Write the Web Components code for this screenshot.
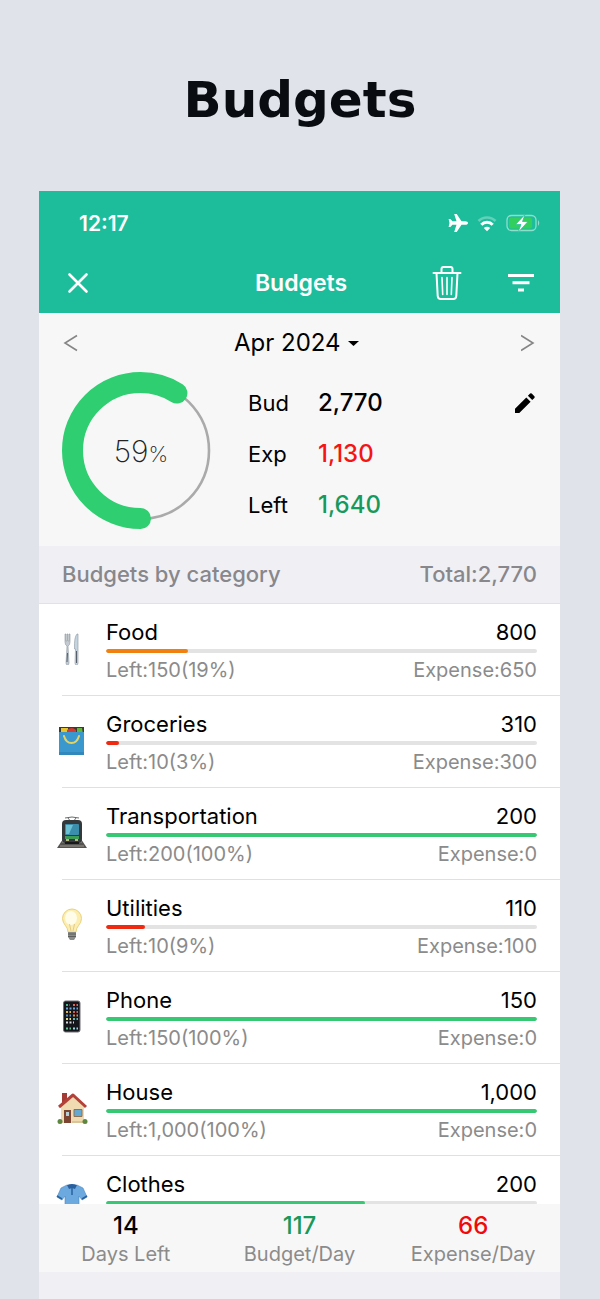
<!DOCTYPE html>
<html lang="en">
<head>
<meta charset="utf-8">
<meta name="viewport" content="width=device-width, initial-scale=1">
<title>Budgets</title>
<style>
    body {
        margin: 0;
        background: #e0e4ea;
        color: #000;
        font-family: Inter, "Liberation Sans", sans-serif;
        font-size: 22px;
    }
</style>
</head>
<body>
<budget-page></budget-page>

<script>
// Small colour pictures, one per category
const categoryIcons = {
    food: `
        <g stroke="#8f98a3" stroke-width=".6">
            <path fill="#c3cad2" d="M10 3v8q0 3 2 4l-1 17q0 2 1.500 2t1.500-2l-1-17q2-1 2-4V3h-1v7h-1V3h-1v7h-1V3z"/>
            <path fill="#c3d3df" d="M22 3q-3 3-2.500 15h1l-.5 14q0 2 1.500 2t1.500-2V3z"/>
        </g>
        <path d="M12.500 22l-.5 9M21.500 20v12" stroke="#56606c" stroke-width="1"/>`,
    groceries: `
        <path fill="#3f3b2c" d="M4 4h25v7H4z"/>
        <path fill="#e8c32c" d="M6 5h7v6H6z"/>
        <path fill="#d9382e" d="M12 7q5-4 9 0v4h-9z"/>
        <path fill="#61b83b" d="M22 5h5l1 6h-6z"/>
        <path fill="#3b98cf" d="M4 9h25v23H4z"/>
        <path fill="#3188bd" d="M4 29h25v3H4z"/>
        <path fill="none" stroke="#e5d360" stroke-width="2" stroke-linecap="round" d="M9 13q2 7 7.500 7t7.500-7"/>`,
    transportation: `
        <path fill="#565451" d="M8 24h18l6 9H2z"/>
        <path stroke="#99938c" stroke-width="1" d="M7 27h20M5 31h24"/>
        <path fill="none" stroke="#6a6c6c" stroke-width="1" d="M10 3q7-2 14 0M13 3l3 4M21 3l-3 4"/>
        <rect fill="#34393b" x="7" y="5" width="20" height="23" rx="4"/>
        <rect fill="#3c8fac" x="10" y="9" width="14" height="11" rx="1"/>
        <path fill="#6cc2d4" d="M11 10h7l-4 9h-3z"/>
        <path fill="#3e9b54" d="M10 21h14v3H10z"/>
        <path stroke="#e8e09a" stroke-width="1.500" d="M11 25h3M20 25h3"/>
        <path stroke="#17191a" stroke-width="2" d="M10 28h14"/>`,
    utilities: `
        <path fill="#fbeeb0" stroke="#ead27d" d="M17 2a9.500 9.500 0 0 0-9.500 9.500c0 6 5.500 7.500 5.500 13.500h8c0-6 5.500-7.500 5.500-13.500A9.500 9.500 0 0 0 17 2z"/>
        <ellipse fill="#fffce9" cx="16" cy="11" rx="6" ry="7"/>
        <path fill="none" stroke="#dcc27a" stroke-width=".8" d="M14.500 17l1.500 7M19.500 17l-1.500 7"/>
        <path fill="#8b8d8a" d="M13 25h8v5l-2 3h-4l-2-3z"/>
        <path stroke="#5d5f5d" d="M13 27h8M13 29.500h8"/>`,
    phone: `
        <rect fill="#15161c" stroke="#6e6f78" x="8.500" y="2" width="16.500" height="31" rx="2"/>
        <g fill="none" stroke-width="2" stroke-dasharray="2 1.500">
            <path stroke="#47b889" d="M11 6h4"/><path stroke="#dd6659" d="M18 6h5"/>
            <path stroke="#6ba6df" d="M11 9.500h12"/>
            <path stroke="#e3b34a" d="M11 13h5"/><path stroke="#ce5f58" d="M18 13h5"/>
            <path stroke="#5792d5" d="M11 16.500h5"/><path stroke="#e58747" d="M18 16.500h5"/>
            <path stroke="#e4dc7a" d="M11 20h5"/><path stroke="#57b9bb" d="M18 20h5"/>
            <path stroke="#d7d9de" d="M11 23.500h8"/>
            <path stroke="#60c98f" d="M11 29.500h5"/><path stroke="#9ad6e3" d="M18 29.500h5"/>
        </g>`,
    house: `
        <path fill="#a33c36" d="M7 2h5v10H7z"/>
        <path fill="#f0dab1" d="M6 16L18 5l11 11v16H6z"/>
        <path fill="none" stroke="#b34039" stroke-width="3" stroke-linejoin="round" d="M4 16L18 4l13 12"/>
        <path fill="#7c4532" d="M9 19h7v13H9z"/>
        <path fill="#b7cfd6" d="M11 21h3v4h-3z"/>
        <path fill="#65a8d1" stroke="#8e7152" d="M19 18.500h8v7h-8z"/>
        <path stroke="#d4bc91" stroke-width="1.500" d="M17 31h12"/>
        <circle fill="#5d8740" cx="5" cy="30.500" r="2.500"/>
        <circle fill="#5d8740" cx="30" cy="30.500" r="2.500"/>`,
    clothes: `
        <path fill="#6ca9df" stroke="#4b86c1" stroke-width=".6" d="M12 2q5 4 10 0l6 3 4 9-5 3-3-4v19H10V13l-3 4-5-3 4-9z"/>
        <path fill="#285f9e" d="M12 2q5-2 10 0l-2 4-3-1-3 1z"/>
        <path fill="none" stroke="#28639f" stroke-width="1.500" d="M2 13l5 3M32 13l-5 3M17 5v7"/>`
};

// Page: store heading on top, app window under it
class BudgetPage extends HTMLElement {
    constructor() {
        super();
        this.attachShadow({ mode: 'open' });
        this.shadowRoot.innerHTML = `
            <style>
                :host {
                    display: flex;
                    flex-direction: column;
                    height: 100vh;
                }

                h1 {
                    margin: 0;
                    padding: 70px 16px 61px;
                    text-align: center;
                    font: bold 50px/60px "DejaVu Sans", sans-serif;
                    color: #090d12;
                }

                main {
                    flex: 1;
                    min-height: 0;
                    display: flex;
                    flex-direction: column;
                    margin: 0 40px 0 39px;
                    background: #f0f0f4;
                }

                .heading {
                    display: flex;
                    justify-content: space-between;
                    padding: 14px 23px;
                    border-bottom: 1px solid #e2e2e6;
                    font-size: 22px;
                    line-height: 29px;
                    font-weight: 450;
                    color: #87878c;
                }

                h2 {
                    margin: 0;
                    font: inherit;
                }

                .list {
                    flex: 1;
                    min-height: 0;
                    overflow-y: auto;
                    scrollbar-width: none;
                    background: #fff;
                }

                footer {
                    display: grid;
                    grid-template-columns: repeat(3, 1fr);
                    margin-bottom: 27px;
                    padding: 7px 0 5px;
                    background: #f7f7f7;
                }
            </style>

            <h1>Budgets</h1>
            <main>
                <app-header>Budgets</app-header>
                <budget-summary></budget-summary>
                <div class="heading"><h2>Budgets by category</h2><span>Total:2,770</span></div>
                <div class="list">
                    <category-row icon="food" left="150" percent="19" expense="650" color="#f08010">Food<span slot="amount">800</span></category-row>
                    <category-row icon="groceries" left="10" percent="3" expense="300" color="#f02a10">Groceries<span slot="amount">310</span></category-row>
                    <category-row icon="transportation" left="200" percent="100" expense="0">Transportation<span slot="amount">200</span></category-row>
                    <category-row icon="utilities" left="10" percent="9" expense="100" color="#f02a10">Utilities<span slot="amount">110</span></category-row>
                    <category-row icon="phone" left="150" percent="100" expense="0">Phone<span slot="amount">150</span></category-row>
                    <category-row icon="house" left="1,000" percent="100" expense="0">House<span slot="amount">1,000</span></category-row>
                    <category-row icon="clothes" percent="60">Clothes<span slot="amount">200</span></category-row>
                </div>
                <footer>
                    <day-stat value="14">Days Left</day-stat>
                    <day-stat value="117" style="--stat-color: #18995c">Budget/Day</day-stat>
                    <day-stat value="66" style="--stat-color: #f00a0a">Expense/Day</day-stat>
                </footer>
            </main>
        `;
    }
}

// Green bar: phone status and navigation
class AppHeader extends HTMLElement {
    constructor() {
        super();
        this.attachShadow({ mode: 'open' });
        this.shadowRoot.innerHTML = `
            <style>
                :host {
                    display: block;
                    background: #1dbd9c;
                    color: #fff;
                }

                svg {
                    display: block;
                }

                .status {
                    display: flex;
                    align-items: center;
                    justify-content: space-between;
                    height: 64px;
                    padding: 0 20px 0 40px;
                    font-size: 21px;
                    font-weight: 600;
                }

                .signals {
                    display: flex;
                    align-items: center;
                    gap: 9px;
                }

                nav {
                    display: grid;
                    grid-template-columns: 1fr auto 1fr;
                    align-items: center;
                    height: 55px;
                    padding: 0 24px 3px 27px;
                }

                .title {
                    font-size: 23px;
                    font-weight: 600;
                }

                .actions {
                    display: flex;
                    align-items: center;
                    justify-content: flex-end;
                    gap: 44px;
                }

                button {
                    padding: 0;
                    border: 0;
                    background: none;
                    color: inherit;
                    justify-self: start;
                }
            </style>

            <div class="status">
                <span>12:17</span>
                <div class="signals">
                    <svg width="20" height="20" viewBox="0 0 20 20" fill="#fff" aria-hidden="true">
                        <path d="M20 10c0-1-1.200-1.800-2.500-1.800h-4L8.700 1H6.200l2.300 7.200H4.400L2.400 6H.6l.9 4-.9 4h1.800l2-2.200h4.100L6.200 19h2.500l4.800-7.200h4c1.300 0 2.500-.8 2.500-1.800z"/>
                    </svg>
                    <svg width="20" height="20" viewBox="0 0 20 20" aria-hidden="true">
                        <path fill="none" stroke="#fff" stroke-opacity=".3" stroke-width="2.600" d="M1.500 8a12 12 0 0 1 17 0"/>
                        <path fill="none" stroke="#fff" stroke-width="3" d="M4.300 11.700a8 8 0 0 1 11.400 0"/>
                        <path fill="#fff" d="M10 18.200L6.800 15a4.500 4.500 0 0 1 6.400 0z"/>
                    </svg>
                    <svg width="34" height="20" viewBox="0 0 34 20" aria-hidden="true">
                        <rect x="1" y="2.500" width="29" height="15" rx="4.500" fill="none" stroke="#fff" stroke-opacity=".5" stroke-width="1.300"/>
                        <rect x="3" y="4.500" width="23" height="11" rx="2.500" fill="#33cf5e"/>
                        <path fill="#fff" fill-opacity=".5" d="M32 7q2.500 3 0 6z"/>
                        <path fill="#fff" stroke="#1dbd9c" stroke-width=".7" d="M19 1.500L9.500 11.500H15L12 19.500 22 8.500h-5.500z"/>
                    </svg>
                </div>
            </div>
            <nav>
                <button aria-label="Close">
                    <svg width="24" height="24" viewBox="0 0 24 24" fill="none" stroke="#fff" stroke-width="2.600" stroke-linecap="round"><path d="M3.500 3.500l17 17M20.500 3.500l-17 17"/></svg>
                </button>
                <span class="title"><slot></slot></span>
                <div class="actions">
                    <button aria-label="Delete">
                        <svg width="30" height="36" viewBox="0 0 30 36" fill="none" stroke="#fff" stroke-width="2" stroke-linecap="round" stroke-linejoin="round"><path d="M1.500 8h27M9.500 8V4q0-2 2-2h7q2 0 2 2v4M4.500 8l1.200 23q.2 3 3 3h12.600q2.800 0 3-3l1.200-23"/><path stroke-width="1.600" d="M10 12.500l.7 17M15 12.500v17M20 12.500l-.7 17"/></svg>
                    </button>
                    <button aria-label="Filter">
                        <svg width="30" height="24" viewBox="0 0 30 24" fill="#fff"><path d="M2 3h26v3H2zM6.500 10.300h17v3h-17zM12 17.500h6v3h-6z"/></svg>
                    </button>
                </div>
            </nav>
        `;
    }
}

// Month picker, ring and the three totals
class BudgetSummary extends HTMLElement {
    constructor() {
        super();
        this.attachShadow({ mode: 'open' });
        this.shadowRoot.innerHTML = `
            <style>
                :host {
                    display: block;
                    padding: 0 23px 16px;
                    background: #f7f7f7;
                }

                svg {
                    display: block;
                }

                .month {
                    display: flex;
                    align-items: center;
                    justify-content: space-between;
                    height: 59px;
                }

                label {
                    display: flex;
                    align-items: center;
                }

                select {
                    appearance: none;
                    padding: 0;
                    border: 0;
                    background: none;
                    font: inherit;
                    font-size: 24px;
                    color: #000;
                }

                button {
                    padding: 0;
                    border: 0;
                    background: none;
                }

                .totals {
                    display: flex;
                    align-items: flex-end;
                    gap: 28px;
                }

                .figures {
                    flex: 1;
                }
            </style>

            <div class="month">
                <button aria-label="Previous month">
                    <svg width="16" height="20" viewBox="0 0 16 20" fill="none" stroke="#858585" stroke-width="1.600"><path d="M15 2.500L3 10 15 17.500"/></svg>
                </button>
                <label>
                    <select aria-label="Month"><option>Apr 2024</option></select>
                    <svg width="24" height="24" viewBox="0 0 24 24"><path d="M7 10h11l-5.500 5z"/></svg>
                </label>
                <button aria-label="Next month">
                    <svg width="16" height="20" viewBox="0 0 16 20" fill="none" stroke="#858585" stroke-width="1.600"><path d="M0 2.500L12 10 0 17.500"/></svg>
                </button>
            </div>
            <div class="totals">
                <percent-ring value="59"></percent-ring>
                <div class="figures">
                    <total-line label="Bud">2,770
                        <button slot="action" aria-label="Edit budget">
                            <svg width="24" height="24" viewBox="0 0 24 24"><path d="M2 17.700V22h4.300L17.600 10.700l-4.300-4.300zM21.400 6.900a1.200 1.200 0 0 0 0-1.600l-2.700-2.700a1.200 1.200 0 0 0-1.600 0l-2.200 2.200 4.300 4.300z"/></svg>
                        </button>
                    </total-line>
                    <total-line label="Exp" style="--total-color: #f51414">1,130</total-line>
                    <total-line label="Left" style="--total-color: #18995c">1,640</total-line>
                </div>
            </div>
        `;
    }
}

// Ring that fills clockwise from the bottom
class PercentRing extends HTMLElement {
    constructor() {
        super();
        this.attachShadow({ mode: 'open' });
        this.shadowRoot.innerHTML = `
            <style>
                :host {
                    display: grid;
                    place-items: center;
                }

                svg, .value {
                    grid-area: 1 / 1;
                }

                .value {
                    font-size: 30px;
                    font-weight: 200;
                    color: #222;
                }

                small {
                    font-size: 22px;
                }
            </style>

            <svg width="158" height="158" viewBox="0 0 158 158" fill="none" aria-hidden="true">
                <circle cx="78.500" cy="78.500" r="68.500" stroke="#aaa" stroke-width="2.600"/>
                <circle class="arc" cx="78.500" cy="78.500" r="68" stroke="#2fce71" stroke-width="21" stroke-linecap="round" pathLength="100" transform="rotate(90 78.500 78.500)"/>
            </svg>
            <span class="value"><span id="number"></span><small>%</small></span>
        `;
    }

    connectedCallback() {
        const value = this.getAttribute('value') || '0';
        this.shadowRoot.getElementById('number').textContent = value;
        this.shadowRoot.querySelector('.arc').setAttribute('stroke-dasharray', `${value} 100`);
    }
}

// One label and amount beside the ring
class TotalLine extends HTMLElement {
    constructor() {
        super();
        this.attachShadow({ mode: 'open' });
        this.shadowRoot.innerHTML = `
            <style>
                :host {
                    display: flex;
                    align-items: center;
                    height: 51px;
                    font-size: 22px;
                }

                .label {
                    width: 70px;
                }

                .amount {
                    flex: 1;
                    font-size: 24px;
                    font-weight: 450;
                    color: var(--total-color, #000);
                }
            </style>

            <span class="label"></span>
            <span class="amount"><slot></slot></span>
            <slot name="action"></slot>
        `;
    }

    connectedCallback() {
        this.shadowRoot.querySelector('.label').textContent = this.getAttribute('label');
    }
}

// Category with its bar of what is left
class CategoryRow extends HTMLElement {
    constructor() {
        super();
        this.attachShadow({ mode: 'open' });
        this.shadowRoot.innerHTML = `
            <style>
                :host {
                    display: flex;
                    align-items: center;
                    gap: 17px;
                    padding-left: 16px;
                    background: linear-gradient(#e0e0e2, #e0e0e2) 23px 100% / 100% 1px no-repeat;
                }

                svg {
                    flex: none;
                    margin-bottom: 4px;
                }

                .info {
                    flex: 1;
                    padding: 13px 23px 13px 0;
                }

                .line {
                    display: flex;
                    justify-content: space-between;
                    line-height: 30px;
                }

                .detail {
                    min-height: 26px;
                    font-size: 20px;
                    line-height: 26px;
                    color: #8b8b8b;
                }

                .track {
                    height: 4px;
                    margin: 2px 0 4px;
                    border-radius: 2px;
                    background: #e3e3e3;
                    overflow: hidden;
                }

                .fill {
                    height: 100%;
                    border-radius: 2px;
                    background: #36c872;
                }
            </style>

            <svg width="34" height="34" viewBox="0 0 34 34" fill="none" aria-hidden="true"></svg>
            <div class="info">
                <div class="line"><span><slot></slot></span><slot name="amount"></slot></div>
                <div class="track"><div class="fill"></div></div>
                <div class="line detail"><span id="left"></span><span id="expense"></span></div>
            </div>
        `;
    }

    connectedCallback() {
        const percent = this.getAttribute('percent');
        const fill = this.shadowRoot.querySelector('.fill');

        this.shadowRoot.querySelector('svg').innerHTML = categoryIcons[this.getAttribute('icon')];
        fill.style.width = `${percent}%`;
        if (this.hasAttribute('left')) {
            this.shadowRoot.getElementById('left').textContent = `Left:${this.getAttribute('left')}(${percent}%)`;
        }
        if (this.hasAttribute('expense')) {
            this.shadowRoot.getElementById('expense').textContent = `Expense:${this.getAttribute('expense')}`;
        }
        if (this.hasAttribute('color')) {
            fill.style.background = this.getAttribute('color');
        }
    }
}

// Number over caption in the bottom bar
class DayStat extends HTMLElement {
    constructor() {
        super();
        this.attachShadow({ mode: 'open' });
        this.shadowRoot.innerHTML = `
            <style>
                :host {
                    display: block;
                    text-align: center;
                    font-size: 20px;
                    line-height: 26px;
                    color: #8b8b8b;
                }

                .value {
                    font-size: 24px;
                    line-height: 30px;
                    font-weight: 500;
                    color: var(--stat-color, #000);
                }
            </style>

            <div class="value"></div>
            <slot></slot>
        `;
    }

    connectedCallback() {
        this.shadowRoot.querySelector('.value').textContent = this.getAttribute('value');
    }
}

customElements.define('app-header', AppHeader);
customElements.define('percent-ring', PercentRing);
customElements.define('total-line', TotalLine);
customElements.define('budget-summary', BudgetSummary);
customElements.define('category-row', CategoryRow);
customElements.define('day-stat', DayStat);
customElements.define('budget-page', BudgetPage);
</script>
</body>
</html>
